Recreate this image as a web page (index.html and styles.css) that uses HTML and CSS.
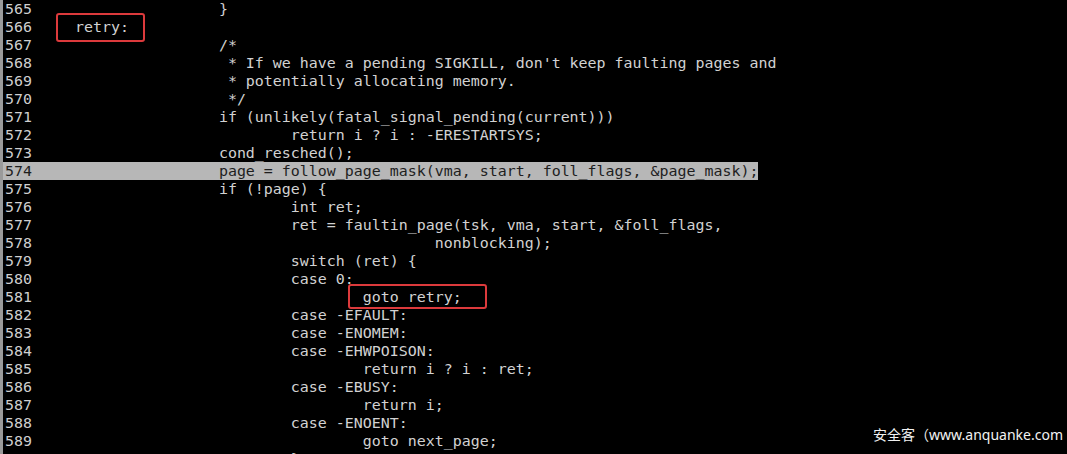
FILE: index.html
```html
<!DOCTYPE html>
<html lang="en">
<head>
<meta charset="utf-8">
<title>mm/gup.c</title>
<link rel="stylesheet" href="styles.css">
</head>
<body>
<div class="term">
<div class="row"><span class="ln">565</span><span class="code">		}</span></div>
<div class="row"><span class="ln">566</span><span class="code"><span class="mark mark-retry">retry:</span></span></div>
<div class="row"><span class="ln">567</span><span class="code">		/*</span></div>
<div class="row"><span class="ln">568</span><span class="code">		 * If we have a pending SIGKILL, don't keep faulting pages and</span></div>
<div class="row"><span class="ln">569</span><span class="code">		 * potentially allocating memory.</span></div>
<div class="row"><span class="ln">570</span><span class="code">		 */</span></div>
<div class="row"><span class="ln">571</span><span class="code">		if (unlikely(fatal_signal_pending(current)))</span></div>
<div class="row"><span class="ln">572</span><span class="code">			return i ? i : -ERESTARTSYS;</span></div>
<div class="row"><span class="ln">573</span><span class="code">		cond_resched();</span></div>
<div class="row sel"><span class="ln">574</span><span class="code">		page = follow_page_mask(vma, start, foll_flags, &amp;page_mask);</span></div>
<div class="row"><span class="ln">575</span><span class="code">		if (!page) {</span></div>
<div class="row"><span class="ln">576</span><span class="code">			int ret;</span></div>
<div class="row"><span class="ln">577</span><span class="code">			ret = faultin_page(tsk, vma, start, &amp;foll_flags,</span></div>
<div class="row"><span class="ln">578</span><span class="code">					nonblocking);</span></div>
<div class="row"><span class="ln">579</span><span class="code">			switch (ret) {</span></div>
<div class="row"><span class="ln">580</span><span class="code">			case 0:</span></div>
<div class="row"><span class="ln">581</span><span class="code">				<span class="mark mark-goto">goto retry;</span></span></div>
<div class="row"><span class="ln">582</span><span class="code">			case -EFAULT:</span></div>
<div class="row"><span class="ln">583</span><span class="code">			case -ENOMEM:</span></div>
<div class="row"><span class="ln">584</span><span class="code">			case -EHWPOISON:</span></div>
<div class="row"><span class="ln">585</span><span class="code">				return i ? i : ret;</span></div>
<div class="row"><span class="ln">586</span><span class="code">			case -EBUSY:</span></div>
<div class="row"><span class="ln">587</span><span class="code">				return i;</span></div>
<div class="row"><span class="ln">588</span><span class="code">			case -ENOENT:</span></div>
<div class="row"><span class="ln">589</span><span class="code">				goto next_page;</span></div>
<div class="row"><span class="ln">590</span><span class="code">			}</span></div>
</div>
<div class="watermark">安全客（www.anquanke.com</div>
</body>
</html>
```
FILE: styles.css
```css
html, body {
  margin: 0;
  padding: 0;
  height: 454px;
  overflow: hidden;
  background: #000;
}

body {
  position: relative;
  font-family: "DejaVu Sans Mono", "Liberation Mono", monospace;
  font-size: 14.95px;
  color: #d2d2d2;
}

.term {
  border-left: 3px solid #9a9a9a;
  height: 454px;
}

.row {
  display: flex;
  height: 18px;
  line-height: 18px;
}

.ln {
  width: 72px;
  flex: none;
  padding-left: 2px;
  box-sizing: border-box;
  color: #cfcfcf;
}

.code {
  white-space: pre;
  tab-size: 8;
  -moz-tab-size: 8;
}

.row.sel {
  width: max-content;
  background: #b7b7b7;
  color: #1e1e1e;
}

.row.sel .ln {
  color: #1e1e1e;
}

.mark {
  position: relative;
  display: inline-block;
  line-height: 18px;
}

.mark::after {
  content: "";
  position: absolute;
  border: 2px solid #dc3a3c;
  border-radius: 3px;
}

.mark-retry::after {
  left: -19px;
  right: -16px;
  top: -5px;
  bottom: -6px;
}

.mark-goto::after {
  left: -15px;
  right: -25px;
  top: -4px;
  bottom: -3px;
}

.watermark {
  position: absolute;
  top: 426px;
  right: 4px;
  font-family: "Noto Sans", "Noto Sans CJK SC", sans-serif;
  font-size: 14px;
  line-height: 18px;
  color: #f2f2f2;
  white-space: nowrap;
}
```
